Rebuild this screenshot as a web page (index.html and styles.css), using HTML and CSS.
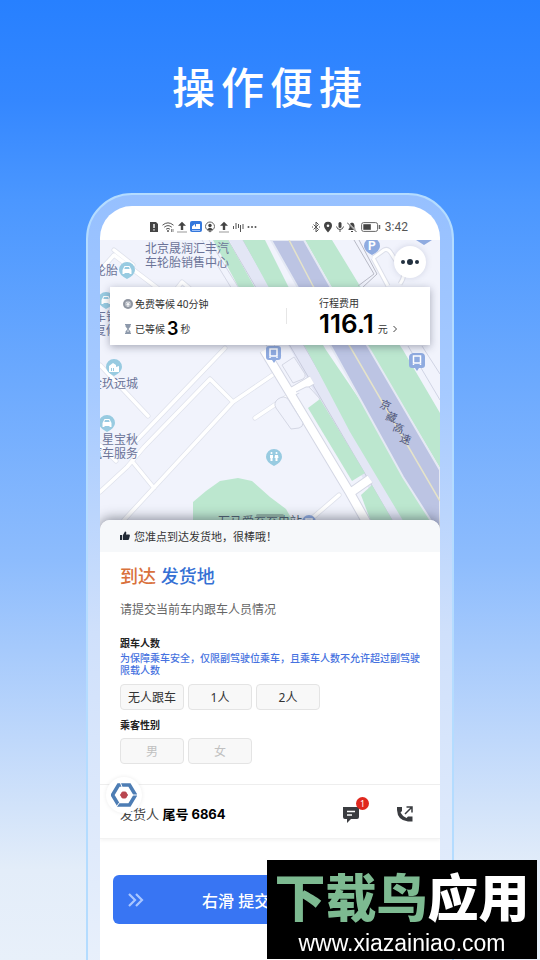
FILE: index.html
```
<!DOCTYPE html>
<html lang="zh-CN">
<head>
  <meta charset="UTF-8">
  <meta name="viewport" content="width=device-width, initial-scale=1.0">
  <title>操作便捷</title>
  <link rel="stylesheet" href="styles.css">
</head>
<body>
  <h1 class="headline">操作便捷</h1>

  <main class="phone">
    <div class="screen">
      <div class="status-bar">
        <div class="status-left">
          <svg viewBox="0 0 12 12"><path d="M2 1h6l2 2v8H2z" fill="#444"/><path d="M6 3v4M6 8.300v1.200" stroke="#fff" stroke-width="1.400"/></svg>
          <svg viewBox="0 0 12 12" fill="none" stroke="#555"><path d="M.5 4.200Q6-.5 11.500 4.200M2.200 6.200Q6 3 9.800 6.200M4 8.200Q6 6.500 8 8.200"/><circle cx="6" cy="10" r=".6" fill="#555"/><path d="M9.500 8v3M11 8v3" stroke-width=".7"/></svg>
          <svg viewBox="0 0 12 12"><path d="M6 .8l4 4H7.200V9H4.800V4.800H2z" fill="#444"/><path d="M1 11h10" stroke="#999"/></svg>
          <svg viewBox="0 0 12 12"><rect y="0" x="0" width="12" height="11" rx="2" fill="#3478dc"/><path d="M2 8V5.500L5 3v2.500h1V3h4v5z" fill="#fff"/><path d="M2 9.500h8" stroke="#bcd6ff" stroke-width=".8"/></svg>
          <svg viewBox="0 0 12 12"><path d="M6 1a4.500 4.500 0 0 1 4.500 4.500C10.500 8 8.500 9 6 11 3.500 9 1.500 8 1.500 5.500A4.500 4.500 0 0 1 6 1z" fill="none" stroke="#666"/><circle cx="6" cy="4.500" r="1.700" fill="#444"/><path d="M3 8.500Q6 5 9 8.500L6 10z" fill="#444"/></svg>
          <svg viewBox="0 0 12 12"><path d="M6 .8l4 4H7.200V9H4.800V4.800H2z" fill="#444"/><path d="M1 11h10" stroke="#999"/></svg>
          <svg viewBox="0 0 12 12" stroke="#555" fill="none"><path d="M1.500 5v3M4 2v6M6.500 3v4M8.500 4v7M11 3v5"/></svg>
          <svg viewBox="0 0 12 12" fill="#555"><circle cx="2.500" cy="6" r="1"/><circle cx="6" cy="6" r="1"/><circle cx="9.500" cy="6" r="1"/></svg>
        </div>
        <div class="status-right">
          <svg viewBox="0 0 10 12" fill="none" stroke="#555"><path d="M2.500 3.500l5 5L5 11V1l2.500 2.500-5 5"/><path d="M1 6h1M8 6h1"/></svg>
          <svg viewBox="0 0 10 12"><path d="M5 .8a4 4 0 0 1 4 4C9 7.500 5 11.500 5 11.500S1 7.500 1 4.800a4 4 0 0 1 4-4z" fill="#444"/><circle cx="5" cy="4.800" r="1.300" fill="#fff"/></svg>
          <svg viewBox="0 0 10 12"><rect x="3.500" y="1" width="3" height="6" rx="1.500" fill="#444"/><path d="M1.500 5.500Q2 8.500 5 8.500T8.500 5.500M5 8.500V11" fill="none" stroke="#555"/></svg>
          <svg viewBox="0 0 10 12"><path d="M1.500 9V8l1-1V4.500Q2.500 2 5 1.500 7.500 2 7.500 4.500V7l1 1v1zM4 10h2v1H4z" fill="#444"/><path d="M.5 1.500l9.500 9.500" stroke="#fff" stroke-width="1.500"/><path d="M0 1.500l9.500 9.500" stroke="#444" stroke-width=".9"/></svg>
          <svg class="battery" viewBox="0 0 20 12"><rect x=".6" y="1.600" width="16" height="8.800" rx="2" fill="none" stroke="#666"/><rect x="2.300" y="3.200" width="7.500" height="5.600" fill="#444"/><path d="M18.500 4v4" stroke="#666" stroke-width="1.500"/></svg>
          <span>3:42</span>
        </div>
      </div>

      <section class="map">
        <svg class="map-canvas" viewBox="100 240 340 290" preserveAspectRatio="xMidYMid slice">
          <rect x="0" y="240" width="540" height="290" fill="#f1f3fc"/>

          <!-- side streets -->
          <g stroke-linejoin="round" stroke-linecap="round" fill="none">
            <g stroke="#dfe2ec" stroke-width="5">
              <path id="streets" d="M96 275L114 255 160 290M114 250L133 265M168 300L182 282 215 310M100 365L148 416M225 348L137 440M210 379L144 447 127 467 100 492M210 379L233 402 124 520M277 372L233 402M116 461L100 445M132 461L154 488M300 388L255 418M339 495L310 520"/>
            </g>
            <g stroke="#fff" stroke-width="3.500">
              <path d="M96 275L114 255 160 290M114 250L133 265M168 300L182 282 215 310M100 365L148 416M225 348L137 440M210 379L144 447 127 467 100 492M210 379L233 402 124 520M277 372L233 402M116 461L100 445M132 461L154 488M300 388L255 418M339 495L310 520"/>
            </g>
          </g>

          <!-- park -->
          <path d="M193 530V502L206 491 220 481 238 478 252 481 270 497 286 509 298 530z" fill="#bce7cf"/>

          <!-- service road -->
          <path d="M229 240H243L414 530H392z" fill="#e3e6f5"/>
          <path d="M228 240L395 525M243 240L303 344 408 525" fill="none" stroke="#c8cbdc"/>
          <path d="M202 240L274 358M209 240L281 356" fill="none" stroke="#d5d8e5"/>

          <!-- green belts -->
          <g fill="#bce7cf">
            <path d="M213 240H228L254 286 290 344H274L238 286z"/>
            <path d="M243 240H265L288 286 326 350 385 437 433 524H405L350 432 307 350 268 286z"/>
            <path d="M305 240H332L360 286 403 350 440 413V468L370 350 331 286z"/>
            <path d="M308 408L320 399 365 473 352 481z"/>
            <path d="M361 495L372 485 398 530H374z"/>
          </g>

          <!-- expressway -->
          <path d="M271 240H304L330 286 370 350 440 470V535L403 477 333 350 297 286z" fill="#bcc4e3" stroke="#e5e9f4" stroke-width="2"/>
          <path d="M289 240L313 286 352 350 440 501" fill="none" stroke="#e5e3c9" stroke-width="1.500"/>

          <!-- local road -->
          <g fill="none" stroke-linejoin="round">
            <path d="M264 350L290 393 350 493 368 525M290 393L312 380M350 493L370 479" stroke="#d4d7e4" stroke-width="10"/>
            <path d="M264 350L290 393 350 493 368 525M290 393L312 380M350 493L370 479" stroke="#fff" stroke-width="8"/>
            <path d="M282 365L294 357 305 374Q306 377 303 379L293 383zM296 392L306 387Q309 386 311 389L320 399M278 399Q284 395 288 399L303 423Q303 427 299 428L291 429 276 408Q273 403 278 399z" fill="#f1f3fc" stroke="#d4d7e4"/>
            <path d="M354 240L374 274 358 286M359 240L377 274 362 288" stroke="#b8bac6"/>
            <path d="M373 258L384 250Q388 248 391 253L403 272Q405 277 400 284M373 258L388 286" stroke="#dcdfea" stroke-width="5"/>
            <path d="M373 258L384 250Q388 248 391 253L403 272Q405 277 400 284M373 258L388 286" stroke="#fff" stroke-width="3"/>
            <path d="M408 346L440 400M422 346L440 374" stroke="#d0d4e4"/>
          </g>

          <!-- markers -->
          <g fill="#98cbe1">
            <path d="M127 262a8 8 0 0 1 8 8q0 5-8 9-8-4-8-9a8 8 0 0 1 8-8zM106 292a8 8 0 0 1 8 8q0 5-8 9-8-4-8-9a8 8 0 0 1 8-8zM114 359a8 8 0 0 1 8 8q0 5-8 9-8-4-8-9a8 8 0 0 1 8-8zM107 415a8 8 0 0 1 8 8q0 5-8 9-8-4-8-9a8 8 0 0 1 8-8zM274 449a8 8 0 0 1 8 8q0 5-8 9-8-4-8-9a8 8 0 0 1 8-8z"/>
          </g>
          <g fill="#fff">
            <path d="M122.500 270l2-4h5l2 4v4h-2v-1h-5v1h-2zM101.500 300l2-4h5l2 4v4h-2v-1h-5v1h-2zM102.500 423l2-4h5l2 4v4h-2v-1h-5v1h-2z"/>
            <path d="M109 366l4-3 3 2v2l3-1v6h-10zM270 455h3v3h-.5v3h-2v-3h-.5zM275 455h3l.5 3h-1v3h-2v-3h-1z"/>
            <circle cx="271.500" cy="453" r="1"/><circle cx="276.500" cy="453" r="1"/>
          </g>
          <g fill="#98cbe1"><path d="M125 267h4l.7 2h-5.400zM104 297h4l.7 2h-5.400zM105 420h4l.7 2h-5.400zM111 368h1v3h-1zM113 368h1v3h-1z"/></g>
          <g fill="#8fabe0">
            <path d="M372 238a8 8 0 0 1 8 8q0 5-8 9-8-4-8-9a8 8 0 0 1 8-8zM416 240h16l-8 5z"/>
            <path d="M269 346h9q3 0 3 3v8q0 3-3 3h-2l-2 3-2-3h-3q-3 0-3-3v-8q0-3 3-3zM413 353h8q4 0 4 4v8q0 3-3 3h-3l-2 3-2-3h-3q-3 0-3-3v-8q0-3 4-4z"/>
            <circle cx="309" cy="522" r="7"/>
          </g>
          <g fill="none" stroke="#fff" stroke-width="1.500"><path d="M270 349h7v7h-7zM270 357v1M277 357v1M413.500 356h7v7h-7zM413.500 364v1M420.500 364v1M306 522v-3h6v3"/></g>

          <g class="map-text">
            <text class="parking" x="368" y="250">P</text>
            <text x="145" y="253">北京晟润汇丰汽</text>
            <text x="145" y="267">车轮胎销售中心</text>
            <text x="94" y="275">轮胎</text>
            <text x="94" y="321">车销</text>
            <text x="94" y="335">复修</text>
            <text x="90" y="388">金玖远城</text>
            <text x="102" y="444">星宝秋</text>
            <text x="90" y="458">汽车服务</text>
            <text class="station" x="218" y="526">万马爱充充电站</text>
            <text class="road-name" x="379 385 392 399" y="407 419 430 441" rotate="20">京藏高速</text>
          </g>
        </svg>

        <button class="more" type="button" aria-label="更多">
          <svg viewBox="0 0 20 8" fill="#22303f"><circle cx="3" cy="4" r="2"/><circle cx="10" cy="4" r="3"/><circle cx="17" cy="4" r="2"/></svg>
        </button>

        <div class="trip-card">
          <div class="wait">
            <p>
              <svg viewBox="0 0 10 10"><circle cx="5" cy="5" r="5" fill="#8f95a0"/><circle cx="5" cy="5" r="3" fill="#b9bec6"/><path d="M3.500 3L5 5l1.500-2M5 5v3M3.500 5.500h3" stroke="#fff" stroke-width=".8" fill="none"/></svg>
              <span>免费等候</span><span>40分钟</span>
            </p>
            <p>
              <svg viewBox="0 0 10 10"><path d="M2 0h6v1H2zM2 9h6v1H2zM2.500 1h5v1.500L5.500 5l2 2.500V9h-5V7.500l2-2.500-2-2.500z" fill="#8d99ab"/><path d="M4 7.500L5 6l1 1.500z" fill="#fff"/></svg>
              <span>已等候</span><strong>3</strong><span>秒</span>
            </p>
          </div>
          <span class="divider"></span>
          <div class="fee">
            <p>行程费用</p>
            <p class="amount"><strong>116.1</strong><span>元</span>
              <svg viewBox="0 0 6 8"><path d="M1.500 1l3 3-3 3" fill="none" stroke="#444"/></svg>
            </p>
          </div>
        </div>
        <span class="handle"></span>
      </section>

      <section class="sheet">
        <div class="notice">
          <svg viewBox="0 0 10 10" fill="#222b36"><path d="M0 4h2.200v5H0zM3 4L5 .5Q6.500.3 6.300 2L6 3.500h3Q10 3.600 9.900 4.700L9 8.300Q8.700 9 8 9H3z"/></svg>
          <span>您准点到达发货地，很棒哦！</span>
        </div>

        <div class="form">
          <h2><span class="arrive">到达</span> 发货地</h2>
          <p class="hint">请提交当前车内跟车人员情况</p>
          <h3>跟车人数</h3>
          <p class="rule">为保障乘车安全，仅限副驾驶位乘车，且乘车人数不允许超过副驾驶限载人数</p>
          <div class="options">
            <button type="button">无人跟车</button>
            <button type="button">1人</button>
            <button type="button">2人</button>
          </div>
          <h3 class="gender">乘客性别</h3>
          <div class="options">
            <button type="button" disabled>男</button>
            <button type="button" disabled>女</button>
          </div>
        </div>

        <div class="contact">
          <p>发货人 <strong>尾号 6864</strong></p>
          <button class="icon-btn" type="button" aria-label="消息">
            <svg viewBox="0 0 18 18"><path d="M1 2h16v10q0 2-2 2H9l-4 4v-4H3q-2 0-2-2z" fill="#3a3c40"/><path d="M5 6.500h8M5 10h5" stroke="#fff" stroke-width="1.500"/></svg>
            <span class="badge">1</span>
          </button>
          <button class="icon-btn" type="button" aria-label="电话">
            <svg viewBox="0 0 18 18"><path d="M1 2h5v4L4.500 7.500Q6.500 11.500 10.500 13L12 11.500h4.500V16.500H12Q1.500 15.500 1 5z" fill="#3a3c40"/><path d="M9 9l6.500-6.500M10.500 2H16v5.500" fill="none" stroke="#3a3c40" stroke-width="1.500"/></svg>
          </button>
          <div class="brand">
            <svg viewBox="0 0 26 24"><path d="M7.500 2h11l6 10-6 10h-11l-6-10z" fill="none" stroke="#4d7db4" stroke-width="3.600"/><path d="M9.500 0l1.500 4M26 12h-4M8.500 19.500L6 23" stroke="#fff"/><path d="M11.300 9h3.400l1.800 3-1.800 3h-3.400l-1.800-3z" fill="#b8464f" stroke="#b8464f"/></svg>
          </div>
        </div>

        <div class="submit">
          <button class="slide-btn" type="button">
            <svg viewBox="0 0 16 14"><path d="M1 1l6 6-6 6M8 1l6 6-6 6" fill="none" stroke="#a9c6ff" stroke-width="2.200"/></svg>
            <span>右滑 提交</span>
          </button>
        </div>
      </section>
    </div>
  </main>

  <footer class="watermark">
    <p class="site-name">下载鸟<span>应用</span></p>
    <p class="site-url">www.xiazainiao.com</p>
  </footer>
</body>
</html>
```
FILE: styles.css
```
* {
  box-sizing: border-box;
}
body {
  margin: 0;
  height: 100vh;
  overflow: hidden;
  font-family: 'Noto Sans', 'Noto Sans CJK SC', sans-serif;
  background: linear-gradient(#2780ff 0, #3487ff 100px, #4b97ff 200px, #8dbcfd 560px, #bfd8fb 740px, #e3edf9 870px, #e8f0fa 100%);
}
h1, h2, h3, p {
  margin: 0;
}
button {
  font-family: inherit;
  border: none;
  padding: 0;
}
svg {
  display: block;
}
.headline {
  padding-top: 55px;
  text-align: center;
  font-family: 'Noto Sans CJK SC', sans-serif;
  font-size: 43px;
  font-weight: 500;
  line-height: 60px;
  letter-spacing: 6px;
  color: #fff;
}
.phone {
  margin: 78px 86px 0;
  padding: 11px 12px 0;
  min-height: 800px;
  border: 2px solid #b4dcff;
  border-radius: 46px 46px 0 0;
  background: linear-gradient(#96c0ff, #a6caff 25%, #cfe0fb 55%, #eaf1fb);
}
.screen {
  min-height: 780px;
  border-radius: 32px 32px 0 0;
  background: #fff;
  overflow: hidden;
}
.status-bar {
  display: flex;
  justify-content: space-between;
  align-items: center;
  height: 34px;
  padding: 7px 32px 0 48px;
}
.status-left, .status-right {
  display: flex;
  align-items: center;
  gap: 2px;
}
.status-left svg {
  width: 12px;
  height: 12px;
}
.status-right svg {
  width: 10px;
  height: 12px;
}
.status-right .battery {
  width: 20px;
  margin: 0 2px;
}
.status-right span {
  font-family: Roboto, sans-serif;
  font-size: 12px;
  line-height: 12px;
  color: #555;
}

/* map */
.map {
  position: relative;
  height: 290px;
  overflow: hidden;
}
.map-canvas {
  width: 100%;
  height: 100%;
}
.map-text {
  font-family: 'Noto Sans CJK SC', sans-serif;
  font-size: 12px;
  fill: #6b7398;
}
.map-text .parking {
  font-family: Roboto, sans-serif;
  font-weight: 700;
  fill: #fff;
}
.map-text .station {
  fill: #4d6070;
}
.map-text .road-name {
  font-size: 11px;
  fill: #4d5478;
}
.more {
  position: absolute;
  top: 6px;
  right: 14px;
  width: 32px;
  height: 32px;
  border-radius: 50%;
  background: #fff;
  box-shadow: 0 0 6px rgba(80, 90, 130, 0.2);
}
.more svg {
  width: 20px;
  height: 8px;
  margin: 0 auto;
}
.trip-card {
  position: absolute;
  top: 47px;
  left: 10px;
  right: 10px;
  display: flex;
  align-items: center;
  height: 58px;
  background: #fff;
  box-shadow: 0 2px 8px rgba(50, 55, 80, 0.4);
  font-size: 10px;
  line-height: 16px;
  color: #333;
}
.wait {
  width: 55%;
  padding-left: 13px;
}
.wait p {
  display: flex;
  align-items: center;
  gap: 2px;
  height: 25px;
}
.wait svg {
  width: 10px;
  height: 10px;
}
.wait strong {
  font-family: Inter, sans-serif;
  font-size: 18px;
  font-weight: 600;
  color: #000;
}
.divider {
  width: 1px;
  height: 16px;
  background: #e6e6e6;
}
.fee {
  flex: 1;
  padding-left: 32px;
}
.amount {
  display: flex;
  align-items: baseline;
  gap: 4px;
}
.amount strong {
  font-family: Inter, sans-serif;
  font-size: 26px;
  font-weight: 600;
  line-height: 26px;
  color: #000;
}
.amount svg {
  width: 6px;
  height: 8px;
}
.handle {
  position: absolute;
  bottom: 13px;
  left: 46%;
  width: 28px;
  height: 3px;
  border-radius: 2px;
  background: #94b5a7;
}

/* bottom sheet */
.sheet {
  position: relative;
  margin-top: -10px;
  border-radius: 10px 10px 0 0;
  background: #fff;
  box-shadow: 0 -2px 12px rgba(40, 45, 60, 0.5);
}
.notice {
  display: flex;
  align-items: center;
  gap: 4px;
  height: 32px;
  padding-left: 20px;
  border-radius: 10px 10px 0 0;
  background: #f6f8fa;
  font-size: 11px;
  color: #333;
}
.notice svg {
  width: 10px;
  height: 10px;
}
.form {
  padding: 12px 16px 20px 20px;
  border-bottom: 1px solid #eee;
}
.form h2 {
  font-size: 18px;
  font-weight: 500;
  line-height: 24px;
  color: #3570d4;
}
.form .arrive {
  color: #d9713c;
}
.hint {
  margin-top: 12px;
  font-size: 12px;
  line-height: 20px;
  color: #666;
}
.form h3 {
  margin-top: 16px;
  font-size: 10px;
  line-height: 14px;
  color: #222;
}
.form .gender {
  margin-top: 8px;
}
.rule {
  margin-top: 2px;
  font-size: 10px;
  font-weight: 500;
  line-height: 12px;
  color: #4672e0;
}
.options {
  display: flex;
  gap: 4px;
  margin-top: 8px;
}
.gender + .options {
  margin-top: 6px;
}
.options button {
  width: 64px;
  height: 26px;
  border: 1px solid #e4e4e4;
  border-radius: 4px;
  background: #f8f8f8;
  font-size: 12px;
  color: #333;
}
.options button:disabled {
  color: #c0c0c0;
}
.contact {
  position: relative;
  display: flex;
  align-items: center;
  gap: 36px;
  height: 54px;
  padding: 4px 26px 0 20px;
  border-bottom: 1px solid #f2f2f2;
  box-shadow: 0 2px 3px rgba(0, 0, 0, 0.04);
}
.contact p {
  flex: 1;
  font-size: 13px;
  color: #444;
}
.contact strong {
  font-family: Inter, 'Noto Sans CJK SC', sans-serif;
  color: #000;
}
.icon-btn {
  position: relative;
  width: 18px;
  height: 18px;
  background: none;
}
.badge {
  position: absolute;
  top: -8px;
  right: -9px;
  width: 13px;
  height: 13px;
  border-radius: 50%;
  background: #e0281e;
  font-size: 9px;
  line-height: 13px;
  color: #fff;
}
.brand {
  position: absolute;
  top: -8px;
  left: 6px;
  width: 36px;
  height: 36px;
  padding: 6px 5px;
  border-radius: 50%;
  background: #fff;
  box-shadow: 0 0 4px rgba(0, 0, 0, 0.08);
}
.submit {
  padding: 36px 13px;
}
.slide-btn {
  display: flex;
  align-items: center;
  gap: 58px;
  width: 100%;
  height: 49px;
  padding-left: 15px;
  border-radius: 6px;
  background: #3875f3;
  font-size: 16px;
  font-weight: 500;
  color: #fff;
}
.slide-btn svg {
  width: 16px;
  height: 14px;
}

.watermark {
  position: fixed;
  right: 3px;
  bottom: 1px;
  width: 270px;
  padding-bottom: 3px;
  background: #000;
  text-align: center;
  color: #fff;
}
.site-name {
  font-family: 'Noto Sans CJK SC', sans-serif;
  font-size: 51px;
  font-weight: 900;
  font-style: oblique 6deg;
  line-height: 70px;
  color: #7dba91;
}
.site-name span {
  color: #fff;
}
.site-url {
  font-family: 'Liberation Sans', sans-serif;
  font-size: 23px;
  line-height: 26px;
}
```
